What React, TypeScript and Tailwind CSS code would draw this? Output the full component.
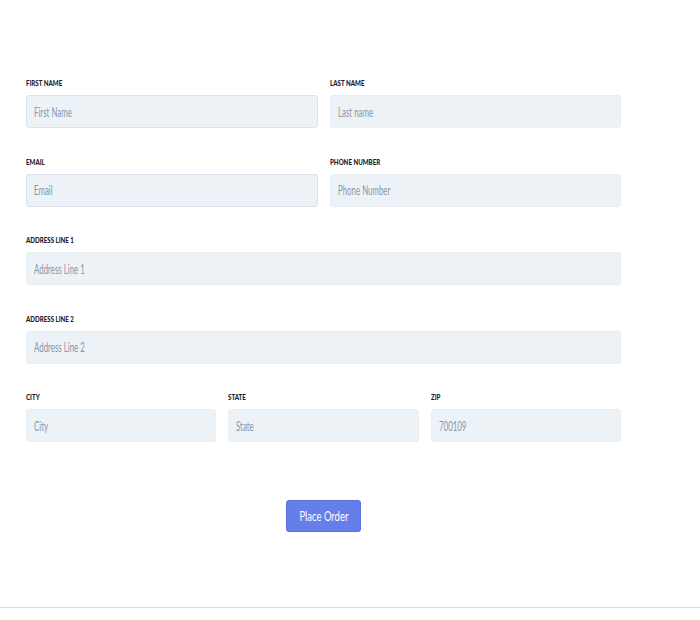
const font = { fontFamily: 'Lato, "Liberation Sans", sans-serif' }

function Field({ label, placeholder, bordered }: { label: string; placeholder: string; bordered?: boolean }) {
  return (
    <div className="flex flex-col">
      <label className="mb-[7px] h-[10px] text-[8px] font-black uppercase leading-[10px] text-[#1a202c]">
        <span className="inline-block origin-left scale-x-[0.77]">{label}</span>
      </label>
      <div className="relative">
        <input
          aria-label={placeholder}
          className={`h-[33px] w-full rounded-[3px] border bg-[#edf2f7] px-[8px] text-[11.5px] text-[#4a5568] outline-none ${
            bordered ? 'border-[#d9e1ec]' : 'border-[#e9eef5]'
          }`}
        />
        {/* condensed placeholder text drawn over the input */}
        <span className="pointer-events-none absolute inset-y-0 left-[8px] flex origin-left scale-x-[0.63] items-center whitespace-nowrap pt-[3px] text-[12.5px] text-[#8a97ab]">
          {placeholder}
        </span>
      </div>
    </div>
  )
}

export default function App() {
  return (
    <div className="min-h-[620px] w-[700px] bg-white" style={font}>
      <div className="pl-[26px] pt-[78px]">
        <form className="flex w-[595px] flex-col gap-y-[28.5px]" onSubmit={(e) => e.preventDefault()}>
          <div className="grid grid-cols-2 gap-x-[12px]">
            <Field label="First Name" placeholder="First Name" bordered />
            <Field label="Last Name" placeholder="Last name" />
          </div>
          <div className="grid grid-cols-2 gap-x-[12px]">
            <Field label="Email" placeholder="Email" bordered />
            <Field label="Phone Number" placeholder="Phone Number" />
          </div>
          <Field label="Address Line 1" placeholder="Address Line 1" />
          <Field label="Address Line 2" placeholder="Address Line 2" />
          <div className="grid grid-cols-3 gap-x-[12px]">
            <Field label="City" placeholder="City" />
            <Field label="State" placeholder="State" />
            <Field label="Zip" placeholder="700109" />
          </div>
          <div className="flex justify-center pt-[29px]">
            <button
              type="submit"
              className="flex h-[32px] w-[75px] items-center justify-center rounded-[3px] border border-[#5a6fe0] bg-[#667eea] pt-px text-[13.5px] text-white"
            >
              <span className="inline-block scale-x-[0.7] whitespace-nowrap">Place Order</span>
            </button>
          </div>
        </form>
      </div>
      <div className="mt-[75px] h-px w-full bg-[#d5dbe3]" />
    </div>
  )
}
